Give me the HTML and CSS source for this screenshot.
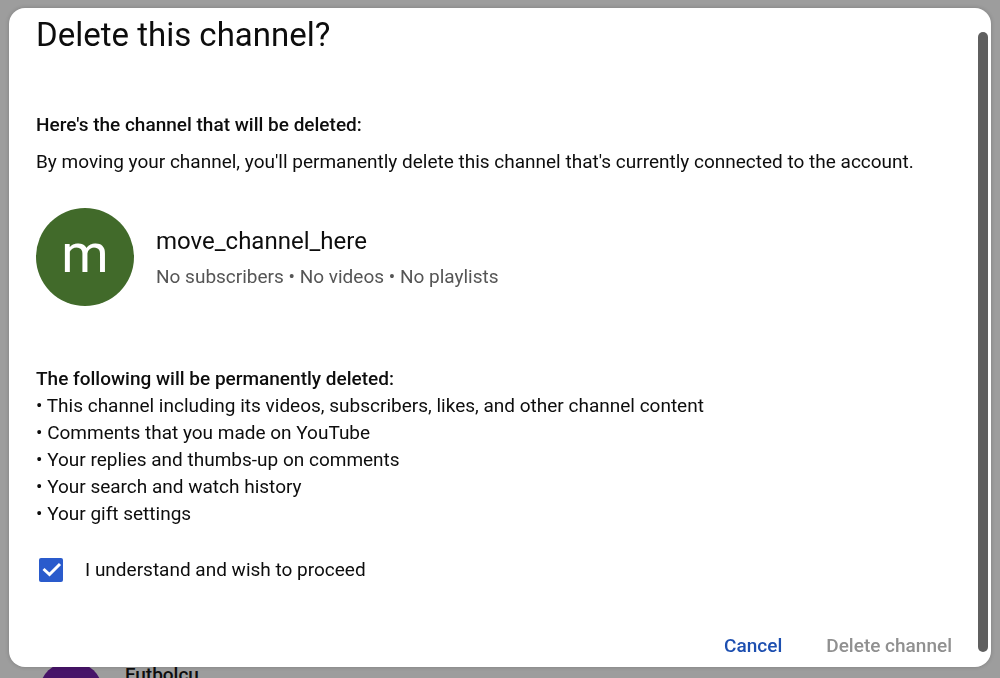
FILE: index.html
```html
<!DOCTYPE html>
<html lang="en">
<head>
<meta charset="utf-8">
<meta name="viewport" content="width=device-width, initial-scale=1">
<title>Delete this channel?</title>
<link rel="stylesheet" href="styles.css">
</head>
<body>
<div class="page">
  <div class="account">
    <span class="account-avatar"></span>
    <span class="account-name">Futbolcu</span>
  </div>
</div>
<div class="overlay">
  <section class="dialog" role="dialog" aria-labelledby="dialog-title">
    <div class="content">
      <h1 class="title" id="dialog-title">Delete this channel?</h1>
      <h2 class="heading">Here's the channel that will be deleted:</h2>
      <p class="intro">By moving your channel, you'll permanently delete this channel that's currently connected to the account.</p>
      <div class="channel">
        <div class="avatar">m</div>
        <div class="channel-info">
          <div class="channel-name">move_channel_here</div>
          <div class="channel-meta">No subscribers • No videos • No playlists</div>
        </div>
      </div>
      <h2 class="heading">The following will be permanently deleted:</h2>
      <ul class="losses">
        <li>This channel including its videos, subscribers, likes, and other channel content</li>
        <li>Comments that you made on YouTube</li>
        <li>Your replies and thumbs-up on comments</li>
        <li>Your search and watch history</li>
        <li>Your gift settings</li>
      </ul>
      <div class="consent">
        <span class="checkbox">
          <input class="checkbox-input" type="checkbox" id="consent" checked>
          <svg class="checkbox-mark" viewBox="0 0 24 24" aria-hidden="true"><path d="M4.500 11L10.500 16.500L21 6"/></svg>
        </span>
        <label for="consent">I understand and wish to proceed</label>
      </div>
      <div class="actions">
        <button class="button" type="button">Cancel</button>
        <button class="button" type="button" disabled>Delete channel</button>
      </div>
    </div>
    <div class="scrollbar"><div class="thumb"></div></div>
  </section>
</div>
</body>
</html>
```
FILE: styles.css
```css
* {
  box-sizing: border-box;
}

body {
  margin: 0;
  height: 100vh;
  overflow: hidden;
  background: #9d9d9d;
  color: #0d0d0d;
  font: 19px/27px Roboto, Arial, sans-serif;
}

.page {
  height: 100vh;
  padding: 661px 39px 0;
  overflow: hidden;
}

.account {
  display: flex;
  gap: 22px;
}

.account-avatar {
  width: 64px;
  height: 64px;
  border-radius: 50%;
  background: #471468;
}

.account-name {
  font-weight: 500;
}

.overlay {
  position: fixed;
  inset: 0;
  display: flex;
  padding: 8px 9px 11px;
}

.dialog {
  flex: 1;
  display: flex;
  border-radius: 16px;
  background: #fff;
  box-shadow: 0 0 4px rgba(0, 0, 0, 0.2);
}

.content {
  flex: 1;
  display: flex;
  flex-direction: column;
  padding: 7px 8px 8px 27px;
}

.title {
  margin: 0 0 56px;
  font-size: 33px;
  line-height: 40px;
  font-weight: 400;
}

.heading {
  margin: 0;
  font-size: 19px;
  font-weight: 500;
}

.intro {
  margin: 10px 0 33px;
}

.channel {
  display: flex;
  align-items: center;
  gap: 22px;
  margin-bottom: 59px;
}

.avatar {
  display: grid;
  place-items: center;
  width: 98px;
  height: 98px;
  padding-bottom: 6px;
  border-radius: 50%;
  background: #416a2a;
  color: #fff;
  font-size: 54px;
  line-height: 56px;
}

.channel-info {
  padding-top: 4px;
}

.channel-name {
  font-size: 24px;
  line-height: 36px;
}

.channel-meta {
  line-height: 36px;
  color: #555;
}

.losses {
  margin: 0;
  padding: 0;
  list-style: none;
}

.losses li::before {
  content: "• ";
}

.consent {
  display: flex;
  align-items: center;
  gap: 22px;
  margin: 29px 0 0 3px;
}

.checkbox {
  display: grid;
  width: 24px;
  height: 24px;
}

.checkbox-input,
.checkbox-mark {
  grid-area: 1 / 1;
  width: 24px;
  height: 24px;
}

.checkbox-input {
  appearance: none;
  margin: 0;
  border-radius: 2px;
  background: #2a5bcc;
}

.checkbox-mark {
  fill: none;
  stroke: #fff;
  stroke-width: 3;
  pointer-events: none;
}

.actions {
  display: flex;
  justify-content: flex-end;
  gap: 20px;
  margin-top: auto;
}

.button {
  padding: 0 12px;
  border: 0;
  background: none;
  color: #1d4fb0;
  font: 500 19px/27px Roboto, Arial, sans-serif;
}

.button:disabled {
  color: #909090;
}

.scrollbar {
  display: flex;
  padding: 24px 3px 15px 6px;
}

.thumb {
  width: 10px;
  border-radius: 5px;
  background: #5f5f5f;
}
```
